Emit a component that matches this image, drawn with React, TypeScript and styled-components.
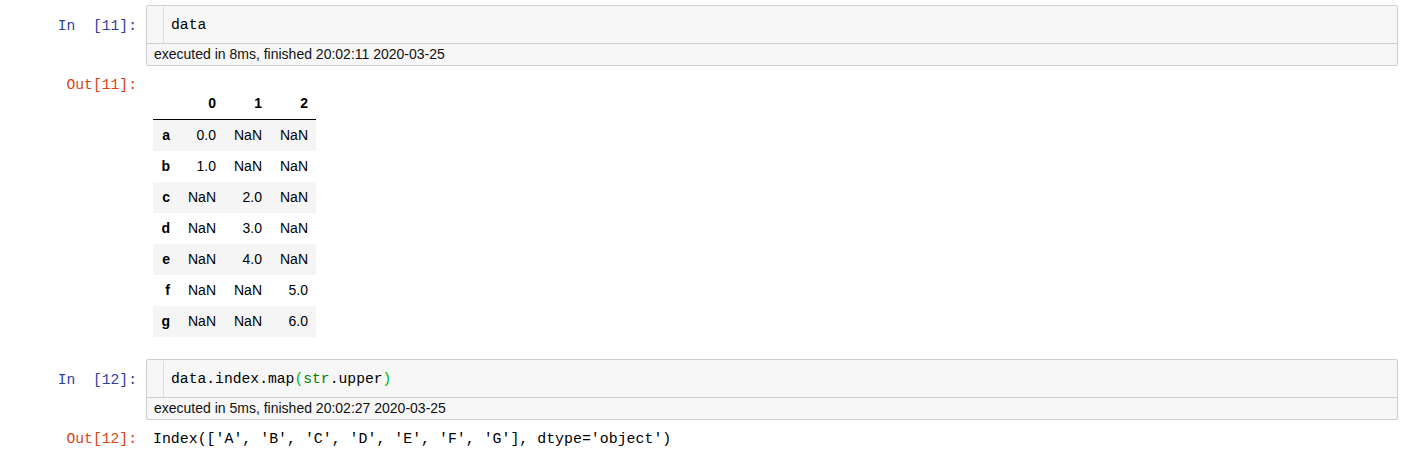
import styled, { createGlobalStyle } from "styled-components"
import React from "react"

const GlobalStyle = createGlobalStyle`
  html, body {
    margin: 0;
    padding: 0;
    background: #fff;
  }
`

const mono = `"Liberation Mono", "DejaVu Sans Mono", monospace`
const sans = `"Liberation Sans", Arial, sans-serif`

const Notebook = styled.div`
  padding: 5px 23px 0 0;
  display: flex;
  flex-direction: column;
`

const Row = styled.div<{ $gap?: number }>`
  display: flex;
  align-items: flex-start;
  margin-top: ${(p) => p.$gap ?? 0}px;
`

const Prompt = styled.div<{ $out?: boolean; $top?: number }>`
  flex: 0 0 138px;
  box-sizing: border-box;
  padding-top: ${(p) => p.$top ?? 0}px;
  padding-right: 1px;
  text-align: right;
  white-space: pre;
  font-family: ${mono};
  font-size: 14.7px;
  line-height: 20px;
  color: ${(p) => (p.$out ? "#D84315" : "#303F9F")};
`

const InputBox = styled.div`
  flex: 1;
  margin-left: 8px;
  border: 1px solid #cfcfcf;
  border-radius: 2px;
  background: #f7f7f7;
`

const CodeLine = styled.div`
  display: flex;
  height: 37px;
`

const Gutter = styled.div`
  width: 16px;
  margin-top: 1px;
  border-right: 1px solid #ddd;
`

const Code = styled.div`
  padding: 9px 0 0 7px;
  font-family: ${mono};
  font-size: 14.7px;
  line-height: 20px;
  color: #000;
  white-space: pre;
`

const Builtin = styled.span`
  color: #008000;
`

const Bracket = styled.span`
  color: #00bb00;
`

const ExecTime = styled.div`
  border-top: 1px solid #cfcfcf;
  height: 21px;
  padding-left: 7px;
  font-family: ${sans};
  font-size: 14px;
  line-height: 21px;
  color: #111;
`

const OutputArea = styled.div<{ $top?: number }>`
  flex: 1;
  margin-left: 8px;
  padding-left: 7px;
  padding-top: ${(p) => p.$top ?? 0}px;
`

const OutText = styled.div`
  font-family: ${mono};
  font-size: 14.9px;
  line-height: 20px;
  color: #000;
  white-space: pre;
`

const Table = styled.table`
  border-collapse: collapse;
  font-family: ${sans};
  font-size: 14px;
  color: #000;
`

const TH = styled.th<{ $w: number }>`
  width: ${(p) => p.$w}px;
  box-sizing: border-box;
  height: 31px;
  padding: 0 8px 0 0;
  text-align: right;
  font-weight: bold;
  vertical-align: middle;
  border-bottom: 1px solid #000;
`

const TR = styled.tr<{ $striped?: boolean }>`
  background: ${(p) => (p.$striped ? "#f5f5f5" : "transparent")};
`

const RowHead = styled.th`
  height: 31px;
  padding: 0 9px 0 0;
  text-align: right;
  font-weight: bold;
  vertical-align: middle;
`

const TD = styled.td`
  height: 31px;
  padding: 0 8px 0 0;
  text-align: right;
  vertical-align: middle;
`

const rows: [string, string, string, string][] = [
  ["a", "0.0", "NaN", "NaN"],
  ["b", "1.0", "NaN", "NaN"],
  ["c", "NaN", "2.0", "NaN"],
  ["d", "NaN", "3.0", "NaN"],
  ["e", "NaN", "4.0", "NaN"],
  ["f", "NaN", "NaN", "5.0"],
  ["g", "NaN", "NaN", "6.0"],
]

const InputCell: React.FC<{
  n: number
  time: string
  gap?: number
  children: React.ReactNode
}> = ({ n, time, gap, children }) => (
  <Row $gap={gap}>
    <Prompt $top={11}>{`In  [${n}]:`}</Prompt>
    <InputBox>
      <CodeLine>
        <Gutter />
        <Code>{children}</Code>
      </CodeLine>
      <ExecTime>{`executed in ${time}`}</ExecTime>
    </InputBox>
  </Row>
)

export default function App() {
  return (
    <>
      <GlobalStyle />
      <Notebook>
        <InputCell n={11} time="8ms, finished 20:02:11 2020-03-25">
          data
        </InputCell>
        <Row>
          <Prompt $out $top={9}>{"Out[11]:"}</Prompt>
          <OutputArea $top={22}>
            <Table>
              <thead>
                <tr>
                  <TH $w={26} />
                  <TH $w={45}>0</TH>
                  <TH $w={46}>1</TH>
                  <TH $w={46}>2</TH>
                </tr>
              </thead>
              <tbody>
                {rows.map((r, i) => (
                  <TR key={r[0]} $striped={i % 2 === 0}>
                    <RowHead>{r[0]}</RowHead>
                    <TD>{r[1]}</TD>
                    <TD>{r[2]}</TD>
                    <TD>{r[3]}</TD>
                  </TR>
                ))}
              </tbody>
            </Table>
          </OutputArea>
        </Row>
        <InputCell n={12} gap={22} time="5ms, finished 20:02:27 2020-03-25">
          {"data.index.map"}
          <Bracket>(</Bracket>
          <Builtin>str</Builtin>
          {".upper"}
          <Bracket>)</Bracket>
        </InputCell>
        <Row>
          <Prompt $out $top={9}>{"Out[12]:"}</Prompt>
          <OutputArea $top={9}>
            <OutText>{"Index(['A', 'B', 'C', 'D', 'E', 'F', 'G'], dtype='object')"}</OutText>
          </OutputArea>
        </Row>
      </Notebook>
    </>
  )
}
